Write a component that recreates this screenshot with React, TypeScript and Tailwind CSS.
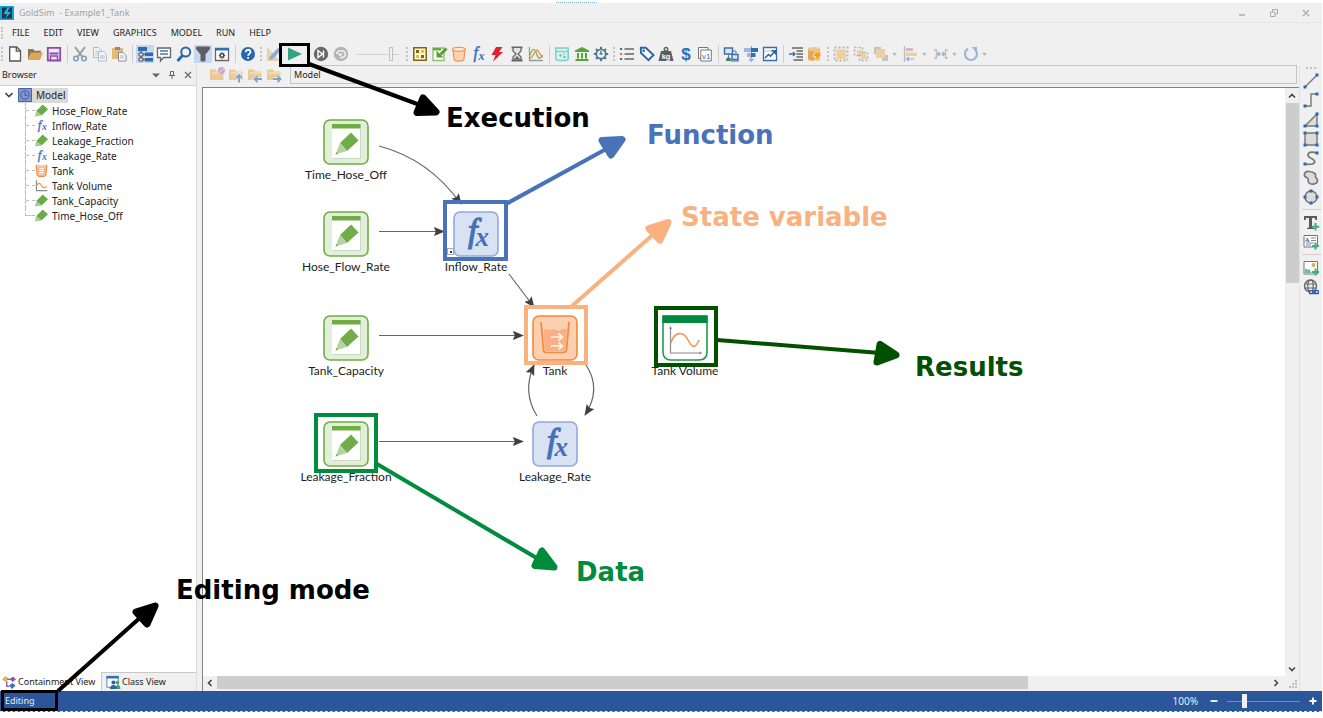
import React from "react";

type Kids = { children?: React.ReactNode };

function Ico({ children, size = "size-4" }: Kids & { size?: string }) {
  return (
    <svg viewBox="0 0 16 16" className={`${size} shrink-0 overflow-visible`} fill="none" aria-hidden="true">
      {children}
    </svg>
  );
}

const FONT_SERIF = "'Liberation Serif', serif";

function Fx({ color = "#3f6cb5" }: { color?: string }) {
  return (
    <g fill={color} stroke={color} fontFamily={FONT_SERIF} fontStyle="italic">
      <text x="3.500" y="12" fontSize="16" strokeWidth=".5">f</text>
      <text x="8.500" y="14" fontSize="12" fontWeight="bold" strokeWidth="0">x</text>
    </g>
  );
}

const icons: Record<string, React.ReactNode> = {
  New: <path d="M2.7 1h7l3.8 3.8V15H2.7zM9.3 1.200v4h4" stroke="#555" strokeWidth="1.300" fill="#fff" />,
  Open: (
    <>
      <path d="M1 3h5l1.500 1.800H14V8H3.500L1 14z" fill="#8a7455" />
      <path d="M4 6.500h12L13 14H1z" fill="#dba75a" />
    </>
  ),
  Save: (
    <>
      <path d="M1.800 1.800h12.400v12.700H1.800z" fill="#f2e6f7" stroke="#8a4aa8" strokeWidth="1.800" />
      <path d="M3.500 7.500h9" stroke="#8a4aa8" strokeWidth="2" />
      <path d="M4.500 14v-4h7v4" stroke="#8a4aa8" strokeWidth="1.500" />
    </>
  ),
  Cut: (
    <>
      <path d="M3 1l7.500 10M13 1L5.500 11" stroke="#9a9a9a" strokeWidth="1.900" />
      <circle cx="4" cy="12.500" r="2.300" stroke="#7d9cc4" strokeWidth="1.500" />
      <circle cx="12" cy="12.500" r="2.300" stroke="#7d9cc4" strokeWidth="1.500" />
    </>
  ),
  Copy: (
    <g stroke="#b5b9be" fill="#f4f4f4">
      <path d="M1.500 1.500h5l3 3v7h-8z" />
      <path d="M3 5h4M3 7h4M3 9h3" stroke="#b9cbe2" />
      <path d="M6.500 5.500h5l3 3V15h-8z" />
      <path d="M8 10h5M8 12h5" stroke="#9fbbe0" />
    </g>
  ),
  Paste: (
    <>
      <path d="M1 2h11v11H1z" fill="#e5b878" />
      <path d="M4 1h5v3H4z" fill="#8a8a8a" />
      <path d="M7.500 6.500h4.500l3 3V15H7.500z" fill="#fff" stroke="#888" />
      <path d="M9 10h4M9 12h4" stroke="#aaa" />
    </>
  ),
  "Browser pane": (
    <>
      <path d="M1 1h9v4H1zM8 6.500h8v3.500H8zM8 12h8v3.500H8z" fill="#2f6ab0" />
      <path d="M4 5v9M4 8.300h4M4 13.700h4" stroke="#555" strokeWidth="1.300" />
      <path d="M2 7h4v3H2zM2 12h4v3H2z" fill="#e5e9f0" stroke="#555" />
    </>
  ),
  Notes: (
    <>
      <path d="M1.500 2h13v9.500H7.500L4.500 15v-3.500h-3z" fill="#fff" stroke="#666" strokeWidth="1.300" />
      <path d="M4 5h8M4 8h8" stroke="#3d7bbd" strokeWidth="1.300" />
    </>
  ),
  Find: (
    <>
      <circle cx="9.700" cy="6" r="4.500" stroke="#2a68ad" strokeWidth="2" />
      <path d="M6.500 9.500L1.500 15" stroke="#2a68ad" strokeWidth="2.800" />
    </>
  ),
  Filter: <path d="M1.500 1h13v2L10 8.500V15H6V8.500L1.500 3z" fill="#5d6063" stroke="#5d6063" />,
  Options: (
    <>
      <path d="M1.500 2.500h13v12h-13z" fill="#fff" stroke="#666" strokeWidth="1.300" />
      <path d="M1 2h14v2.500H1z" fill="#3271b4" />
      <path d="M8 6.300v6.400M4.800 9.500h6.400M5.800 7.300l4.400 4.400M10.200 7.300l-4.400 4.400" stroke="#444" strokeWidth="1.300" />
      <circle cx="8" cy="9.500" r="1.100" fill="#fff" />
    </>
  ),
  Help: (
    <>
      <circle cx="8" cy="8" r="7" fill="#2867ae" />
      <path d="M5.700 6.200C5.700 3 10.500 3 10.500 6c0 1.800-2.400 2-2.400 3.700M8.100 11v1.800" stroke="#fff" strokeWidth="1.800" />
    </>
  ),
  "Edit mode": (
    <>
      <path d="M1 1v14h13z" fill="#ecd0a0" />
      <path d="M4 8v4h4z" fill="#f0f0f0" />
      <path d="M3 14l1-4L12 2l3 2-8 9z" fill="#8fabcf" />
    </>
  ),
  Run: <path d="M1 1.500L15 8 1 14.500z" fill="#35a083" />,
  Step: (
    <>
      <circle cx="8" cy="8" r="7.200" fill="#686868" />
      <path d="M5 4.500L9.500 8 5 11.500zM10.500 4.500v7" stroke="#fff" strokeWidth="1.400" />
    </>
  ),
  Reset: (
    <>
      <circle cx="8" cy="8" r="7.200" fill="#b3b3b3" />
      <path d="M3.500 8C4.500 3.500 12.300 4 12.300 8c0 3-3 3.800-5.300 3.800" stroke="#f2f2f2" strokeWidth="1.600" />
      <path d="M4.500 7.500H10L7.200 10.500z" fill="#f2f2f2" />
    </>
  ),
  Container: (
    <>
      <path d="M1.800 1.800h12.400v12.400H1.800z" fill="#fff8dc" stroke="#83610f" strokeWidth="1.500" />
      <path d="M4 4h3v3H4zM9 9h3v3H9z" fill="#8a5f13" />
      <path d="M9 4h3v3H9zM4 9h3v3H4z" fill="#f0bd2c" />
    </>
  ),
  Input: (
    <>
      <path d="M2 2h11v12.500H2z" fill="#fff" stroke="#8fc075" strokeWidth="1.400" />
      <path d="M2 2h8v2.500H2z" fill="#6aaa40" />
      <path d="M15.500 2.500L9.500 8.500" stroke="#55a030" strokeWidth="3" />
      <path d="M5.500 4.500V11.500h7z" fill="#55a030" />
    </>
  ),
  Reservoir: (
    <>
      <path d="M2 3.500L3.200 14c2 1.500 7.600 1.500 9.600 0L14 3.500z" fill="#fbd3b0" stroke="#f29455" strokeWidth="1.200" />
      <ellipse cx="8" cy="3.300" rx="6.500" ry="2" fill="#fdeadb" stroke="#f29455" strokeWidth="1.200" />
    </>
  ),
  Function: <Fx />,
  Event: <path d="M7 1h6.500L10 6h4L4 15.800 6.500 9H2.500z" fill="#e3202b" />,
  Delay: (
    <>
      <path d="M2.500 1.500h11M2.500 14.500h11" stroke="#666" strokeWidth="2" />
      <path d="M4 2v3l3 3-3 3v3h8v-3L9 8l3-3V2" fill="#e5e5e5" stroke="#666" strokeWidth="1.300" />
      <path d="M5 13l3-3 3 3z" fill="#666" />
    </>
  ),
  "Time series": (
    <>
      <path d="M1.500 1v13.500H15" stroke="#999" strokeWidth="1.300" />
      <path d="M2 9c3-8 5-7 7 0 1 4 4 4 5.500 0" stroke="#79b554" strokeWidth="1.300" />
      <path d="M2 12c3 0 5-8 7-8s3 7 6 7" stroke="#f08c4f" strokeWidth="1.300" />
    </>
  ),
  Pool: (
    <>
      <path d="M1.800 2h12.400v11c0 2-12.400 2-12.400 0z" fill="#d8f3f1" stroke="#7fd0cb" strokeWidth="1.600" />
      <path d="M2 5.500h12" stroke="#7fd0cb" strokeWidth="1.300" />
      <circle cx="6.500" cy="9.500" r="1.200" fill="#66beb8" />
      <circle cx="10.500" cy="11" r="1.200" fill="#66beb8" />
      <circle cx="10" cy="8" r=".8" fill="#66beb8" />
    </>
  ),
  Fund: <path d="M8 1L1 4.500V6h14V4.500zM3 7h2v5.500H3zM7 7h2v5.500H7zM11 7h2v5.500h-2zM1.500 13h13v2h-13z" fill="#56a33b" />,
  Gear: (
    <>
      <circle cx="8" cy="8" r="4.700" stroke="#4b7d8c" strokeWidth="1.800" />
      <path d="M8 .8v2.500M8 12.700v2.500M.8 8h2.500M12.700 8h2.500M3 3l1.700 1.700M11.300 11.300L13 13M13 3l-1.700 1.700M4.700 11.300L3 13" stroke="#4b7d8c" strokeWidth="2" />
      <path d="M8 5v3.500M6.500 8h3" stroke="#4b7d8c" strokeWidth="1.500" />
    </>
  ),
  List: (
    <>
      <path d="M5.500 3H15M5.500 8H15M5.500 13H15" stroke="#666" strokeWidth="1.400" />
      <path d="M1 2h2.200v2H1zM1 12h2.200v2H1z" fill="#3b74b8" />
      <path d="M1 7h2.200v2H1z" fill="#e36b3b" />
    </>
  ),
  Tag: (
    <>
      <path d="M1.800 1.800h5L14.500 9 9.500 14.200 2 7z" fill="#f7fafd" stroke="#2a65a8" strokeWidth="1.900" />
      <circle cx="4.700" cy="4.700" r="1.300" fill="#2a65a8" />
    </>
  ),
  Units: (
    <>
      <path d="M3 5h10l2.500 10H.5z" fill="#5c5c5c" />
      <circle cx="8" cy="3.300" r="1.800" stroke="#5c5c5c" strokeWidth="1.400" />
      <text x="3.700" y="13" fontSize="7.500" fontWeight="bold" fill="#fff" fontFamily="'Liberation Sans', sans-serif">kg</text>
    </>
  ),
  Currency: (
    <text x="3.300" y="14" fontSize="17" fontWeight="bold" fill="#2d6db5" fontFamily="'Liberation Sans', sans-serif">$</text>
  ),
  Versions: (
    <>
      <path d="M1.500 1.500h9.500v11H1.500z" fill="#fff" stroke="#777" />
      <path d="M3.800 4h10.500v11H3.800z" fill="#fff" stroke="#777" />
      <text x="5" y="12.500" fontSize="8" fill="#2d6db5" fontFamily="'Liberation Sans', sans-serif">v1</text>
    </>
  ),
  Network: (
    <>
      <path d="M1.500 2h8v6h-8zM9 8.500h6v5H9z" fill="#dce7f4" stroke="#346fb2" strokeWidth="1.400" />
      <path d="M10 5h3v3M5.500 8v4" stroke="#777" />
      <path d="M3 13l2.500-2.500L8 13v2H3z" fill="#3c8568" />
      <path d="M8 15h8" stroke="#346fb2" />
    </>
  ),
  Align: (
    <>
      <path d="M8.500 0v16" stroke="#999" />
      <path d="M1 2h7v4H1zM4 7h4v4H4zM6 12.500h4.500V15H6z" fill="#9bb8da" />
      <path d="M8 2h7v4H8zM8 7h4.500v4H8z" fill="#2f6db5" />
    </>
  ),
  Chart: (
    <>
      <path d="M1.500 1.500h13v13h-13z" fill="#fff" stroke="#346fb2" strokeWidth="1.300" />
      <path d="M2 5h12" stroke="#a6c1e0" />
      <path d="M3 12l3.500-3.500 2 1.800L13 5M13.300 8.500V4.700H9.500" stroke="#2f6194" strokeWidth="1.500" />
    </>
  ),
  Outline: (
    <>
      <path d="M4 2H15M8.500 5H15M8.500 8H15M8.500 11H15M5.500 14H15" stroke="#666" strokeWidth="1.600" />
      <path d="M1 8h6M5 6l2 2-2 2" stroke="#3770b3" strokeWidth="1.300" />
    </>
  ),
  Database: (
    <>
      <path d="M1 3v10c0 2.500 12 2.500 12 0V3z" fill="#e5a85a" />
      <ellipse cx="7" cy="3" rx="6" ry="2" fill="#f1c78d" />
      <path d="M8 6h7l-2 3h2.500l-8.500 6.500 2-5H6z" fill="#f59a1e" stroke="#fff" strokeWidth=".7" />
    </>
  ),
  Group: (
    <>
      <path d="M1.500 1.500h13v13h-13z" stroke="#b3b3b3" strokeDasharray="2 2" strokeWidth="1.800" />
      <path d="M3.500 3.500h9.500v9.500H3.500z" fill="#efcf9f" />
    </>
  ),
  Ungroup: (
    <>
      <path d="M1.500 1.500h8v8h-8zM6.500 6.500h8v8h-8z" stroke="#adadad" strokeDasharray="2 2" strokeWidth="1.600" />
      <path d="M4 4h5v5H4zM8 8h5v5H8z" fill="#efcf9f" />
    </>
  ),
  Order: (
    <>
      <path d="M1 1h7v7H1zM9 9h6v6H9z" fill="#c3c3c3" />
      <path d="M3 3h9v9H3z" fill="#efcf9f" />
    </>
  ),
  "Align left": (
    <>
      <path d="M1.500 0v16" stroke="#bbb" strokeWidth="1.400" />
      <path d="M3 2h7v3H3z" fill="#c3c3c3" />
      <path d="M3 6.500h11v3.500H3z" fill="#efcf9f" />
      <path d="M3.500 13H11M6 11l-2.500 2L6 15" stroke="#8eacd2" strokeWidth="1.200" />
    </>
  ),
  Space: (
    <>
      <path d="M1 4h2.500v8H1M15 4h-2.500v8H15" stroke="#bbb" strokeWidth="1.400" />
      <path d="M4.500 8h7M6.500 6l-2 2 2 2M9.500 6l2 2-2 2" stroke="#8eacd2" strokeWidth="1.200" />
    </>
  ),
  Rotate: (
    <>
      <path d="M5 2.800a6 6 0 1 0 7 0.800" stroke="#9ab6d8" strokeWidth="2.200" />
      <path d="M8.500 1H14v5.500z" fill="#9ab6d8" />
    </>
  ),
  Line: (
    <>
      <path d="M2 14L14 2" stroke="#777" strokeWidth="1.400" />
      <path d="M.5 12.500h3v3h-3zM12.500.5h3v3h-3z" fill="#2a68b4" />
    </>
  ),
  Polyline: (
    <>
      <path d="M2 14h6V2h6" stroke="#777" strokeWidth="1.400" />
      <path d="M.5 12.500h3v3h-3zM12.500.5h3v3h-3z" fill="#2a68b4" />
    </>
  ),
  Polygon: (
    <>
      <path d="M2 14L14 2v12z" stroke="#777" strokeWidth="1.400" fill="#dcdcdc" />
      <path d="M.5 12.500h3v3h-3zM12.500.5h3v3h-3zM12.500 12.500h3v3h-3z" fill="#2a68b4" />
    </>
  ),
  Rectangle: (
    <>
      <path d="M2 2h12v12H2z" stroke="#777" strokeWidth="1.400" fill="#dcdcdc" />
      <path d="M.5 12.500h3v3h-3zM12.500.5h3v3h-3zM12.500 12.500h3v3h-3zM.5.5h3v3h-3z" fill="#2a68b4" />
    </>
  ),
  Curve: (
    <>
      <path d="M2 14c5 1 11 0 9.500-3S4 8 5 4.500 11 2 14 3" stroke="#777" strokeWidth="1.700" />
      <path d="M.5 12.500h3v3h-3zM12.500 1.500h3v3h-3z" fill="#2a68b4" />
    </>
  ),
  "Closed curve": (
    <path d="M6 1.500C1 1 0 6 3.500 7.500S4 11 6 13s8 1.500 8.500-2-3-3-2-5S11 2 6 1.500z" stroke="#777" strokeWidth="1.700" fill="#dcdcdc" />
  ),
  Ellipse: (
    <>
      <circle cx="8" cy="8" r="6" stroke="#777" strokeWidth="1.500" fill="#dcdcdc" />
      <path d="M6.500.5h3v3h-3zM6.500 12.500h3v3h-3zM.5 6.500h3v3h-3zM12.500 6.500h3v3h-3z" fill="#2a68b4" />
    </>
  ),
  Text: (
    <>
      <path d="M1 1h13v4h-1.500l-.7-2H9v9.500l2 .5v1H4v-1l2-.5V3H3.200l-.7 2H1z" fill="#595959" />
      <path d="M12.500 8v7.500M8.800 11.800h7.400" stroke="#3fae81" strokeWidth="2" />
    </>
  ),
  "Text box": (
    <>
      <path d="M1 1.500h13.500v11.500H1z" stroke="#777" fill="#fff" />
      <text x="1.800" y="7.700" fontSize="6.500" fontWeight="bold" fill="#2a5f9e" fontFamily={FONT_SERIF}>A</text>
      <path d="M8 4h5M8 6.500h5M3 9h8M3 11h5" stroke="#888" />
      <path d="M12.500 8.500v7M9 12h7" stroke="#3fae81" strokeWidth="2" />
    </>
  ),
  Picture: (
    <>
      <path d="M1 1.500h13.500v12.500H1z" stroke="#777" fill="#fff" />
      <circle cx="10.500" cy="5" r="1.900" fill="#f3a641" />
      <path d="M2 13V9h2l1 1 2-1v2l2 2z" fill="#64bf98" />
      <path d="M12.500 8.500v7M9 12h7" stroke="#3fae81" strokeWidth="2" />
    </>
  ),
  Hyperlink: (
    <>
      <circle cx="7.500" cy="7" r="6" stroke="#666" strokeWidth="1.400" />
      <ellipse cx="7.500" cy="7" rx="2.700" ry="6" stroke="#666" strokeWidth="1.200" />
      <path d="M1.500 5h12M1.500 9h12" stroke="#666" strokeWidth="1.200" />
      <path d="M6 11h10v4.500H6z" fill="#f0f0f0" />
      <path d="M6.700 11.700h3.600v2.800H6.700zM11.700 11.700h3.600v2.800h-3.600zM9 13.100h4" stroke="#2a5fa8" strokeWidth="1.300" />
    </>
  ),
};

function Tool({ name, active }: { name: string; active?: boolean }) {
  return (
    <button
      type="button"
      aria-label={name}
      className={active ? "size-4 shrink-0 bg-[#c5d6ee] outline-1 outline-[#c5d6ee]" : "size-4 shrink-0"}
    >
      <Ico>{icons[name]}</Ico>
    </button>
  );
}

function Tools({ names, width, active = [] }: { names: string[]; width: string; active?: string[] }) {
  return (
    <div className={`flex shrink-0 justify-between ${width}`}>
      {names.map((n) => (
        <Tool key={n} name={n} active={active.includes(n)} />
      ))}
    </div>
  );
}

function Sep() {
  return (
    <div className="flex w-2.5 shrink-0 justify-center">
      <div className="h-[18px] w-px bg-[#cfcfcf]" />
    </div>
  );
}

function Grip() {
  return (
    <div className="flex w-2.5 shrink-0 justify-center">
      <div className="h-3.5 border-l-2 border-dotted border-[#c4c4c4]" />
    </div>
  );
}

function Drop({ name }: { name: string }) {
  return (
    <button type="button" aria-label={name} className="flex w-[30px] shrink-0 items-center gap-[3px]">
      <Ico>{icons[name]}</Ico>
      <svg viewBox="0 0 6 4" className="h-[3px] w-[5px]">
        <path d="M0 0h6L3 4z" fill="#b5b5b5" />
      </svg>
    </button>
  );
}

function FolderTool({ kind }: { kind: "new" | "up" | "left" | "right" }) {
  const arrows = {
    up: "M11 15.500V8.500M8 11L11 8l3 3",
    left: "M15 12H8M10.500 9L7.500 12l3 3",
    right: "M7 12h7M11.500 9l3 3-3 3",
  };
  return (
    <button type="button" aria-label={`Folder ${kind}`} className="size-4">
      <Ico>
        <path d="M1 2.500h6l1 2h6.500V13H1z" fill="#ecca96" />
        <path d="M3 6h11.500" stroke="#f8ead2" />
        {kind === "new" ? (
          <>
            <circle cx="12.500" cy="3.500" r="3.500" fill="#c9a3d8" />
            <path d="M10.500 5.500l4-4" stroke="#f3e8f6" />
          </>
        ) : (
          <>
            <path d={arrows[kind]} stroke="#f0f0f0" strokeWidth="3.500" />
            <path d={arrows[kind]} stroke="#7da3d0" strokeWidth="1.900" />
          </>
        )}
      </Ico>
    </button>
  );
}

type Kind = "data" | "fx" | "tank" | "result";

const treeIcons: Record<Kind, React.ReactNode> = {
  data: (
    <>
      <path d="M1.500 8.500L9.500 .5 16 6.500 8 14z" fill="#6bab46" />
      <path d="M1.500 8.500L0 15.500 8 14z" fill="#a5cc8c" />
    </>
  ),
  fx: <Fx color="#4a72b8" />,
  tank: (
    <>
      <path d="M1.500 1l1.200 12.500 2 1.500h6.600l2-1.500L14.500 1" fill="#fbd2b4" stroke="#f08e4e" strokeWidth="1.700" />
      <path d="M4.500 4h7v8h-7z" fill="#fff" stroke="#f3a268" />
      <path d="M5 6.700h6M5 9.300h6" stroke="#f3a268" />
    </>
  ),
  result: (
    <>
      <path d="M1.800 1.500v12.800H15" stroke="#8b8b8b" strokeWidth="1.400" />
      <path d="M2 8c2.500-4 4.500-3 6 0s4 4 6.500 1" stroke="#f29155" strokeWidth="1.600" />
    </>
  ),
};

const tree: [string, Kind][] = [
  ["Hose_Flow_Rate", "data"],
  ["Inflow_Rate", "fx"],
  ["Leakage_Fraction", "data"],
  ["Leakage_Rate", "fx"],
  ["Tank", "tank"],
  ["Tank Volume", "result"],
  ["Tank_Capacity", "data"],
  ["Time_Hose_Off", "data"],
];

function NodeIcon({ kind }: { kind: Kind }) {
  return (
    <svg viewBox="0 0 46 46" className="size-[46px]" fill="none" aria-hidden="true">
      {kind === "data" && (
        <>
          <rect x="1" y="1" width="44" height="44" rx="6" fill="#e1efd9" stroke="#70ad47" strokeWidth="1.600" />
          <path d="M10 5h28v35H10z" fill="#c9dcbf" />
          <path d="M9 5h28v34H9z" fill="#fff" />
          <path d="M9 5h28.500v4.500H9z" fill="#70ad47" />
          <path d="M17 24L28 13.500l7.500 8L24 32z" fill="#70ad47" />
          <path d="M17 24l-4.500 11.500L24 32z" fill="#b5d3a2" />
          <path d="M13.400 33l-.9 2.500 2.700-.8z" fill="#70ad47" />
        </>
      )}
      {kind === "fx" && (
        <>
          <rect x="1" y="1" width="44" height="44" rx="6" fill="#d9e2f3" stroke="#8faadc" strokeWidth="1.600" />
          <g fill="#4470b8" stroke="#4470b8" fontFamily={FONT_SERIF} fontStyle="italic">
            <text x="15" y="30.500" fontSize="34" strokeWidth="1.200">f</text>
            <text x="22.500" y="35" fontSize="27" fontWeight="bold" strokeWidth="0">x</text>
          </g>
        </>
      )}
      {kind === "tank" && (
        <>
          <rect x="1" y="1" width="44" height="44" rx="6" fill="#fccfb0" stroke="#f4883f" strokeWidth="1.600" />
          <path d="M9 7l2.500 28c.2 1.800 1 2.500 3 2.500h17c2 0 2.800-.7 3-2.500L37 7" stroke="#f4883f" strokeWidth="1.700" />
          <path d="M11.500 15c3-2 4 0 6 0s3-2 6-.5 3 1.500 5 .5 4-2 6.500-.5L33.500 34c-.2 1.300-.8 2-2 2h-17c-1.200 0-1.800-.7-2-2z" fill="#f9b084" />
          <path d="M19 22h10M26.500 18.500l4 3.500-4 3.500M19 31h10M26.500 27.500l4 3.500-4 3.500" stroke="#fff3e8" strokeWidth="1.700" />
        </>
      )}
      {kind === "result" && (
        <>
          <path d="M1 1h44v36c0 5-3 8-8 8H9c-5 0-8-3-8-8z" fill="#fff" stroke="#1f9a52" strokeWidth="1.600" />
          <path d="M.5.500h45V8H.5z" fill="#008a3e" />
          <path d="M8.500 12v26H39" stroke="#8c8c8c" strokeWidth="1.200" />
          <path d="M7 14l1.500-3 1.500 3M37.500 36.500l3 1.500-3 1.500" fill="#8c8c8c" />
          <path d="M9 28c3-11 12-13 17-3s8 7 11 0" stroke="#f7964f" strokeWidth="1.600" />
        </>
      )}
    </svg>
  );
}

const nodes: { label: string; kind: Kind; place: string }[] = [
  { label: "Time_Hose_Off", kind: "data", place: "left-[143px] top-[31px]" },
  { label: "Hose_Flow_Rate", kind: "data", place: "left-[143px] top-[123px]" },
  { label: "Inflow_Rate", kind: "fx", place: "left-[273px] top-[123px]" },
  { label: "Tank_Capacity", kind: "data", place: "left-[143px] top-[227px]" },
  { label: "Tank", kind: "tank", place: "left-[352px] top-[227px]" },
  { label: "Tank Volume", kind: "result", place: "left-[482px] top-[227px]" },
  { label: "Leakage_Fraction", kind: "data", place: "left-[143px] top-[333px]" },
  { label: "Leakage_Rate", kind: "fx", place: "left-[352px] top-[333px]" },
];

const links = [
  "M176 58Q226 71 258 116",
  "M176 143.500H241",
  "M306 186L331 219",
  "M176 247.500H320",
  "M176 353.500H320",
  "M334 328Q319 304 331 277",
  "M383 277Q399 301 382 327",
];

function Links() {
  return (
    <svg className="absolute left-0 top-0 h-[420px] w-[600px]" fill="none" aria-hidden="true">
      <defs>
        <marker id="tip" viewBox="0 0 12 10" refX="11" refY="5" markerWidth="11" markerHeight="10" markerUnits="userSpaceOnUse" orient="auto">
          <path d="M0 0l12 5-12 5 2-5z" fill="#404040" />
        </marker>
      </defs>
      {links.map((d) => (
        <path key={d} d={d} stroke="#666" strokeWidth="1.200" markerEnd="url(#tip)" />
      ))}
    </svg>
  );
}

function Chevron({ d }: { d: string }) {
  return (
    <svg viewBox="0 0 8 8" className="size-2" fill="none" aria-hidden="true">
      <path d={d} stroke="#444" strokeWidth="1.600" />
    </svg>
  );
}

const callouts = [
  { color: "#000000", line: "M309 64L420 105", head: "M436 112L417 112.500 423 98z", box: [280.5, 44.5, 28, 21], sw: 3 },
  { color: "#4a72b8", line: "M506 204L608 148", head: "M622 139.500L602 140.500 611 155z", box: [445, 202, 61, 57], sw: 4 },
  { color: "#f9b17f", line: "M572 306L656 232", head: "M668 222.500L649 228.500 660 240z", box: [526, 307, 60, 56], sw: 4 },
  { color: "#005000", line: "M717 340L880 353", head: "M896 355L880 344.500 877 362z", box: [656, 308, 60, 57], sw: 4 },
  { color: "#008c3c", line: "M377 464L540 560", head: "M554 567L542 551 535 565.500z", box: [316, 415, 60, 56], sw: 4 },
  { color: "#000000", line: "M58 691L142 616", head: "M155 606L136 612 147 624z", box: [2.5, 691.5, 54, 18], sw: 3 },
];

const notes = [
  { text: "Execution", cls: "left-[446px] top-[102px] text-black" },
  { text: "Function", cls: "left-[647px] top-[119px] text-[#4a72b8]" },
  { text: "State variable", cls: "left-[681px] top-[201px] text-[#f9b17f]" },
  { text: "Results", cls: "left-[915px] top-[351px] text-[#005000]" },
  { text: "Data", cls: "left-[576px] top-[556px] text-[#008c3c]" },
  { text: "Editing mode", cls: "left-[176px] top-[574px] text-black" },
];

function Annotations() {
  return (
    <div className="pointer-events-none absolute inset-0">
      <svg className="absolute inset-0 size-full" fill="none" aria-hidden="true">
        <path d="M556 2.500h42" stroke="#7fb2d6" strokeDasharray="1 1" />
        {callouts.map((c, i) => (
          <g key={i} stroke={c.color} strokeLinejoin="round">
            <rect x={c.box[0]} y={c.box[1]} width={c.box[2]} height={c.box[3]} strokeWidth={c.sw} strokeLinejoin="miter" />
            <path d={c.line} strokeWidth="4" />
            <path d={c.head} fill={c.color} strokeWidth="7" />
          </g>
        ))}
      </svg>
      {notes.map((n) => (
        <span key={n.text} className={`absolute whitespace-nowrap font-['DejaVu_Sans',sans-serif] text-[26px] leading-8 font-bold ${n.cls}`}>
          {n.text}
        </span>
      ))}
    </div>
  );
}

export default function App() {
  return (
    <div className="relative flex min-h-screen flex-col bg-white pt-[3px] pr-px pb-[6px] font-['Noto_Sans',sans-serif] text-[10px] leading-4 text-[#222]">
      <header className="bg-[#f0f0f0]">
        <div className="flex h-5 items-center border-b border-[#e6e6e6] text-[#a3a3a3]">
          <svg viewBox="0 0 14 14" className="mr-[5px] size-3.5" aria-hidden="true">
            <path d="M0 0h14v14H0z" fill="#10a3dc" />
            <path d="M2 1.500h10v11H2z" fill="#263541" />
            <path d="M7.500 1.500L3.500 8H7l-1.500 4.500L11 6H7.500L9.500 1.500z" fill="#18b6ef" />
          </svg>
          <h1 className="flex-1 text-[9px] whitespace-pre">GoldSim  - Example1_Tank</h1>
          <div className="flex items-center gap-6 pr-3">
            <button type="button" aria-label="Minimize" className="size-2">
              <svg viewBox="0 0 8 8"><path d="M1 6h6" stroke="#aaa" strokeWidth="1.500" /></svg>
            </button>
            <button type="button" aria-label="Restore" className="size-2">
              <svg viewBox="0 0 8 8" fill="none"><path d="M.5 3h4.500v4.500H.5zM2.500 3V.5h5V5H5" stroke="#aaa" /></svg>
            </button>
            <button type="button" aria-label="Close" className="size-2">
              <svg viewBox="0 0 8 8"><path d="M1 1l6 6M7 1L1 7" stroke="#aaa" strokeWidth="1.200" /></svg>
            </button>
          </div>
        </div>
        <nav className="flex h-5 items-center gap-3.5">
          <div className="-mr-3.5 flex w-3 pl-px"><div className="h-3 border-l-2 border-dotted border-[#c4c4c4]" /></div>
          {["FILE", "EDIT", "VIEW", "GRAPHICS", "MODEL", "RUN", "HELP"].map((m) => (
            <button key={m} type="button" className="text-[9px]">{m}</button>
          ))}
        </nav>
        <div className="flex h-[22px] items-center">
          <div className="flex w-[7px] pl-px"><div className="h-3.5 border-l-2 border-dotted border-[#c4c4c4]" /></div>
          <Tools names={["New", "Open", "Save"]} width="w-[55px]" />
          <Sep />
          <Tools names={["Cut", "Copy", "Paste"]} width="w-[55px]" />
          <Sep />
          <Tools names={["Browser pane", "Notes", "Find", "Filter", "Options"]} width="w-[93px]" active={["Browser pane", "Filter"]} />
          <Sep />
          <Tool name="Help" />
          <Grip />
          <Tools names={["Edit mode", "Run"]} width="w-[37px]" />
          <div className="w-2.5 shrink-0" />
          <Tools names={["Step", "Reset"]} width="w-9" />
          <input
            type="range"
            aria-label="Simulation speed"
            defaultValue={85}
            className="mr-[3px] ml-2 h-4 w-[42px] shrink-0 appearance-none bg-transparent bg-[linear-gradient(#d0d0d0,#d0d0d0)] bg-[length:100%_1px] bg-center bg-no-repeat [&::-webkit-slider-thumb]:h-3.5 [&::-webkit-slider-thumb]:w-1 [&::-webkit-slider-thumb]:appearance-none [&::-webkit-slider-thumb]:border [&::-webkit-slider-thumb]:border-[#c0c0c0] [&::-webkit-slider-thumb]:bg-[#f0f0f0]"
          />
          <Grip />
          <Tools names={["Container", "Input", "Reservoir", "Function", "Event", "Delay", "Time series"]} width="w-[132px]" />
          <Sep />
          <Tools names={["Pool", "Fund", "Gear"]} width="w-[55px]" />
          <Grip />
          <Tools names={["List", "Tag", "Units", "Currency", "Versions"]} width="w-[94px]" />
          <Sep />
          <Tools names={["Network", "Align", "Chart"]} width="w-[55px]" />
          <Sep />
          <Tools names={["Outline", "Database"]} width="w-[35px]" />
          <Grip />
          <Tools names={["Group", "Ungroup"]} width="w-[36px]" />
          <div className="ml-1 flex">
            {["Order", "Align left", "Space", "Rotate"].map((n) => <Drop key={n} name={n} />)}
          </div>
        </div>
      </header>

      <div className="flex flex-1 bg-[#f0f0f0]">
        <aside className="flex w-[197px] shrink-0 flex-col border-r border-[#dcdcdc]">
          <div className="flex h-5 items-center pl-0.5">
            <h2 className="flex-1 text-[9px]">Browser</h2>
            <div className="flex items-center gap-2 pr-1">
              <button type="button" aria-label="Pane menu" className="size-2">
                <svg viewBox="0 0 8 8"><path d="M0 2.500h8L4 6.500z" fill="#666" /></svg>
              </button>
              <button type="button" aria-label="Pin" className="size-2">
                <svg viewBox="0 0 8 8" fill="none"><path d="M2.500 4.500V.5h3v4M1 4.500h6M4 4.500V8" stroke="#666" /></svg>
              </button>
              <button type="button" aria-label="Close pane" className="size-2">
                <svg viewBox="0 0 8 8"><path d="M1 1l6 6M7 1L1 7" stroke="#666" strokeWidth="1.200" /></svg>
              </button>
            </div>
          </div>
          <div className="flex-1 border-t border-[#d0d0d0] bg-white pt-px">
            <div className="flex h-4 items-center pl-[5px]">
              <Chevron d="M0.500 2L4 5.500 7.500 2" />
              <div className="ml-[5px] flex h-[15px] items-center bg-[#d9d9d9] pr-0.5">
                <svg viewBox="0 0 14 14" className="mr-1 size-3.5" fill="none" aria-hidden="true">
                  <path d="M.5.500h13v13H.5z" fill="#8497d0" stroke="#4a60a8" />
                  <circle cx="7" cy="7" r="4.300" stroke="#3e56a3" />
                  <path d="M7 4v3.300h2.500" stroke="#3e56a3" />
                </svg>
                <span>Model</span>
              </div>
            </div>
            <ul className="pl-[25px]">
              {tree.map(([label, kind], i) => (
                <li key={label} className="flex h-[15px] items-center">
                  <div className={i === tree.length - 1 ? "h-2 w-2.5 self-start border-b border-l border-dashed border-[#bbb]" : "flex h-[15px] w-2.5 items-center border-l border-dashed border-[#bbb]"}>
                    {i < tree.length - 1 && <div className="w-full border-t border-dashed border-[#bbb]" />}
                  </div>
                  <Ico size="size-[13px]">{treeIcons[kind]}</Ico>
                  <span className="ml-1">{label}</span>
                </li>
              ))}
            </ul>
          </div>
          <div role="tablist" className="flex h-[19px] text-[9px]">
            <button role="tab" aria-selected="true" type="button" className="flex w-[101px] items-center gap-0.5 whitespace-nowrap bg-white pl-0.5">
              <Ico size="size-3.5">
                <path d="M0 5l4-4 4 3-4 4z" fill="#e6b155" />
                <path d="M9 4l4-2 3 3-4 3z" fill="#8656b5" />
                <path d="M5.500 7v6H8M6 5h4" stroke="#8656b5" strokeWidth="1.500" />
                <path d="M8 12l4-3 3.500 3-4 4z" fill="#3d75bd" />
              </Ico>
              Containment View
            </button>
            <button role="tab" aria-selected="false" type="button" className="flex flex-1 items-center gap-0.5 border-t border-l border-[#c8c8c8] pl-1">
              <Ico size="size-3.5">
                <path d="M1 2h13v12H1z" fill="#fff" stroke="#4279b5" />
                <path d="M.5 1h14v3H.5z" fill="#3271b4" />
                <circle cx="13" cy="8.500" r="2" fill="#37a47a" />
                <path d="M10.500 16c0-6 6-6 6 0z" fill="#37a47a" />
                <circle cx="8.500" cy="8.500" r="2.300" fill="#2e62a0" />
                <path d="M4.500 16c0-6 8-6 8 0z" fill="#2e62a0" />
              </Ico>
              Class View
            </button>
          </div>
        </aside>

        <main className="ml-[5px] flex min-w-0 flex-1 flex-col">
          <div className="flex h-[22px] items-start pl-[7px]">
            <div className="flex w-[81px] shrink-0 gap-[3px] pt-0.5">
              <FolderTool kind="new" />
              <FolderTool kind="up" />
              <FolderTool kind="left" />
              <FolderTool kind="right" />
            </div>
            <input aria-label="Model path" defaultValue="Model" className="mr-0.5 h-[19px] min-w-0 flex-1 border border-[#c3c3c8] bg-[#f0f0f0] px-[3px] text-[9px]" />
          </div>
          <div className="flex flex-1 flex-col border-t border-l border-[#828282]">
            <div className="flex flex-1">
              <div className="relative min-w-0 flex-1 overflow-hidden bg-white">
                <Links />
                {nodes.map((n) => (
                  <figure key={n.label} className={`absolute flex w-0 flex-col items-center ${n.place}`}>
                    <NodeIcon kind={n.kind} />
                    <figcaption className="mt-0.5 font-['Lato',sans-serif] text-[12px] leading-4 whitespace-nowrap">{n.label}</figcaption>
                  </figure>
                ))}
                <div className="absolute left-[244px] top-[160px] flex size-[7px] items-center justify-center border border-[#aaa] bg-white">
                  <div className="size-0.5 bg-[#333]" />
                </div>
              </div>
              <div className="flex w-3.5 shrink-0 flex-col items-center">
                <button type="button" aria-label="Scroll up" className="flex h-[15px] items-center"><Chevron d="M1 5.500L4 2.500 7 5.500" /></button>
                <div className="h-[180px] w-[13px] bg-[#cdcdcd]" />
                <button type="button" aria-label="Scroll down" className="mt-auto flex h-[15px] items-center"><Chevron d="M1 2.500L4 5.500 7 2.500" /></button>
              </div>
            </div>
            <div className="flex h-[15px] items-start">
              <button type="button" aria-label="Scroll left" className="flex h-[13px] w-3.5 items-center justify-center"><Chevron d="M5.500 1L2.500 4 5.500 7" /></button>
              <div className="h-[13px] w-[74%] bg-[#cdcdcd]" />
              <button type="button" aria-label="Scroll right" className="ml-auto flex h-[13px] w-3.5 items-center justify-center"><Chevron d="M2.500 1L5.500 4 2.500 7" /></button>
              <svg viewBox="0 0 14 14" className="ml-0.5 size-3.5" aria-hidden="true">
                <path d="M10 4h2v2h-2zM10 7h2v2h-2zM10 10h2v2h-2zM7 7h2v2H7zM7 10h2v2H7zM4 10h2v2H4z" fill="#bdbdbd" />
              </svg>
            </div>
          </div>
        </main>

        <div className="flex w-[23px] shrink-0 flex-col items-center border-l border-[#e2e2e2]">
          <div className="mt-0.5 mb-1 w-2.5 border-t-2 border-dotted border-[#c4c4c4]" />
          <div className="flex h-[132px] flex-col justify-between">
            {["Line", "Polyline", "Polygon", "Rectangle", "Curve", "Closed curve", "Ellipse"].map((n) => <Tool key={n} name={n} />)}
          </div>
          <div className="mt-1 mb-[5px] h-px w-[19px] bg-[#cfcfcf]" />
          <div className="flex flex-col gap-[3px]">
            <Tool name="Text" />
            <Tool name="Text box" />
          </div>
          <div className="mt-1 mb-[5px] h-px w-[19px] bg-[#cfcfcf]" />
          <div className="flex flex-col gap-[3px]">
            <Tool name="Picture" />
            <Tool name="Hyperlink" />
          </div>
        </div>
      </div>

      <footer className="flex h-[21px] items-center border-b border-dashed border-[#dbe6f5] bg-[#2b579a] pr-[5px] pl-[5px] text-[#e3ebf6]">
        <span className="flex-1 text-[9px]">Editing</span>
        <label htmlFor="zoom" className="mr-3">100%</label>
        <button type="button" aria-label="Zoom out" className="size-2">
          <svg viewBox="0 0 8 8"><path d="M.5 4h7" stroke="#fff" strokeWidth="1.800" /></svg>
        </button>
        <input
          id="zoom"
          type="range"
          defaultValue={22}
          className="mx-[9px] h-4 w-[73px] appearance-none bg-transparent bg-[linear-gradient(#6f8fc2,#6f8fc2)] bg-[length:100%_1px] bg-center bg-no-repeat [&::-webkit-slider-thumb]:h-3.5 [&::-webkit-slider-thumb]:w-[5px] [&::-webkit-slider-thumb]:appearance-none [&::-webkit-slider-thumb]:bg-[#f0f0f0]"
        />
        <button type="button" aria-label="Zoom in" className="size-2">
          <svg viewBox="0 0 8 8"><path d="M.5 4h7M4 .5v7" stroke="#fff" strokeWidth="1.800" /></svg>
        </button>
      </footer>
      <Annotations />
    </div>
  );
}
